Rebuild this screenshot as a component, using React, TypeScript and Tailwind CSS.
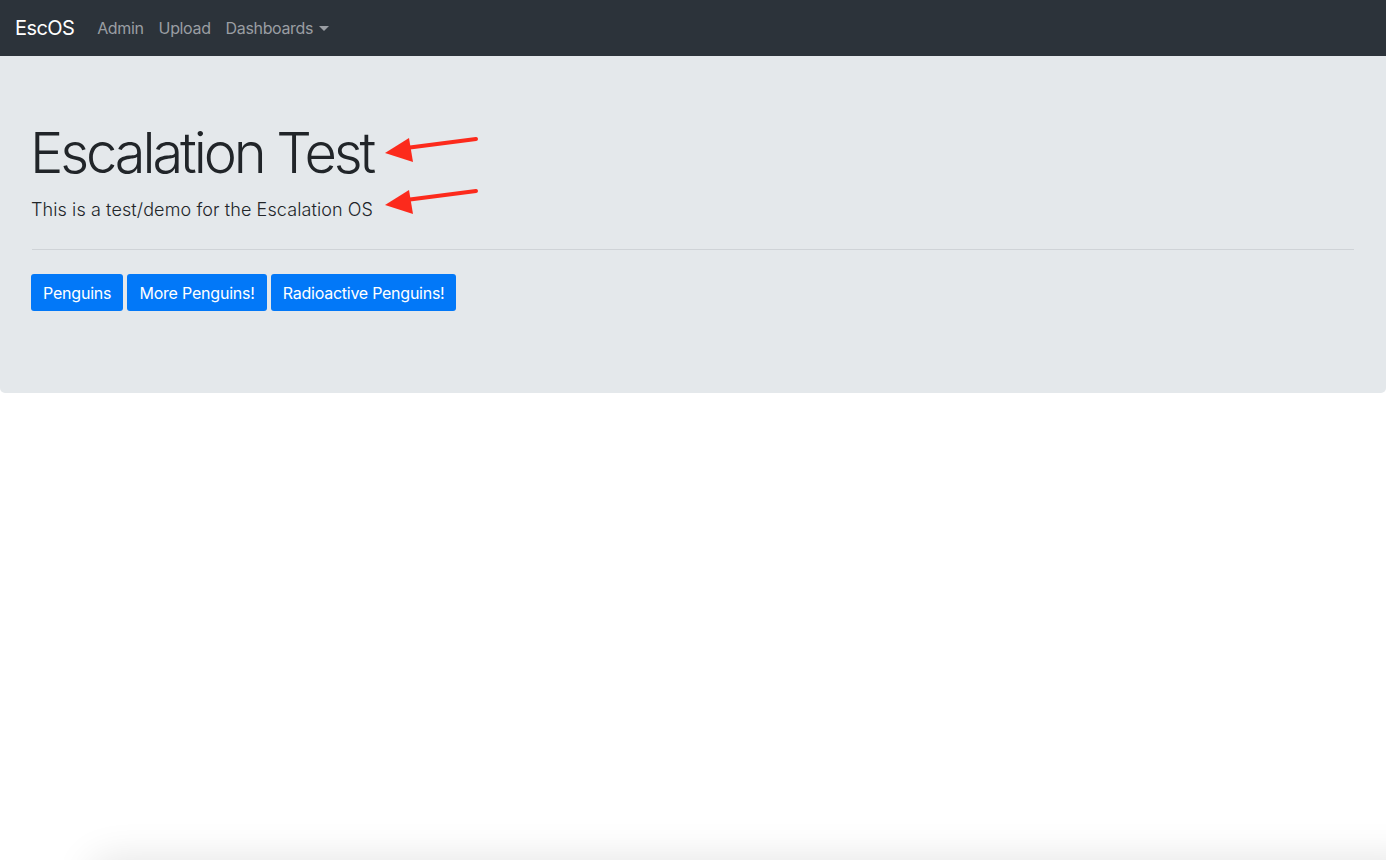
import React from "react";

function Arrow({ top }: { top: number }) {
  return (
    <svg
      className="absolute"
      style={{ left: 380, top }}
      width="100"
      height="30"
      viewBox="0 0 100 30"
    >
      <line x1="26" y1="13" x2="96" y2="4" stroke="#fc2a1c" strokeWidth="4" strokeLinecap="round" />
      <polygon points="5,18 29,3 33,27" fill="#fc2a1c" />
    </svg>
  );
}

export default function App() {
  const font = { fontFamily: 'Inter, "Liberation Sans", Arial, sans-serif' };
  return (
    <div className="relative min-h-[860px] bg-white overflow-hidden" style={font}>
      <nav className="h-14 bg-[#2c333a] flex items-center px-4">
        <span className="text-white text-[20px] mr-[15px] ml-[-1px] tracking-[-0.6px]">EscOS</span>
        <div className="flex items-center text-[16px] text-[#9a9ea3] tracking-[-0.35px]">
          <span className="px-2">Admin</span>
          <span className="pl-[7px] pr-2">Upload</span>
          <span className="pl-[7px] pr-2 flex items-center">
            Dashboards
            <svg width="10" height="6" viewBox="0 0 10 6" className="ml-[6px] mt-[1px]">
              <polygon points="0,0 10,0 5,5" fill="#9a9ea3" />
            </svg>
          </span>
        </div>
      </nav>
      <div className="bg-[#e4e8eb] rounded-b-[5px] px-8 pt-16 pb-[66px]">
        <h1 className="text-[56px] leading-[1.2] font-light text-[#212529] tracking-[-3.1px] mb-2 ml-[-2px]">
          Escalation Test
        </h1>
        <p className="text-[18px] font-light text-[#212529] leading-[30px] tracking-[0.1px] ml-[-1px]">
          This is a test/demo for the Escalation OS
        </p>
        <hr className="my-6 border-0 border-t border-[#cfd3d7]" />
        <div className="flex gap-1 mb-4 ml-[-1px]">
          <button className="bg-[#0278f8] text-white text-[16px] h-[37px] px-3 rounded-[3px] tracking-[-0.2px]">Penguins</button>
          <button className="bg-[#0278f8] text-white text-[16px] h-[37px] px-3 rounded-[3px] tracking-[-0.2px]">More Penguins!</button>
          <button className="bg-[#0278f8] text-white text-[16px] h-[37px] px-3 rounded-[3px] tracking-[-0.25px]">Radioactive Penguins!</button>
        </div>
      </div>
      <Arrow top={135} />
      <Arrow top={187} />
      <div className="absolute left-[90px] right-[-40px] top-[860px] h-10 rounded-[20px] shadow-[0_0_40px_rgba(0,0,0,0.12)]" />
    </div>
  );
}
